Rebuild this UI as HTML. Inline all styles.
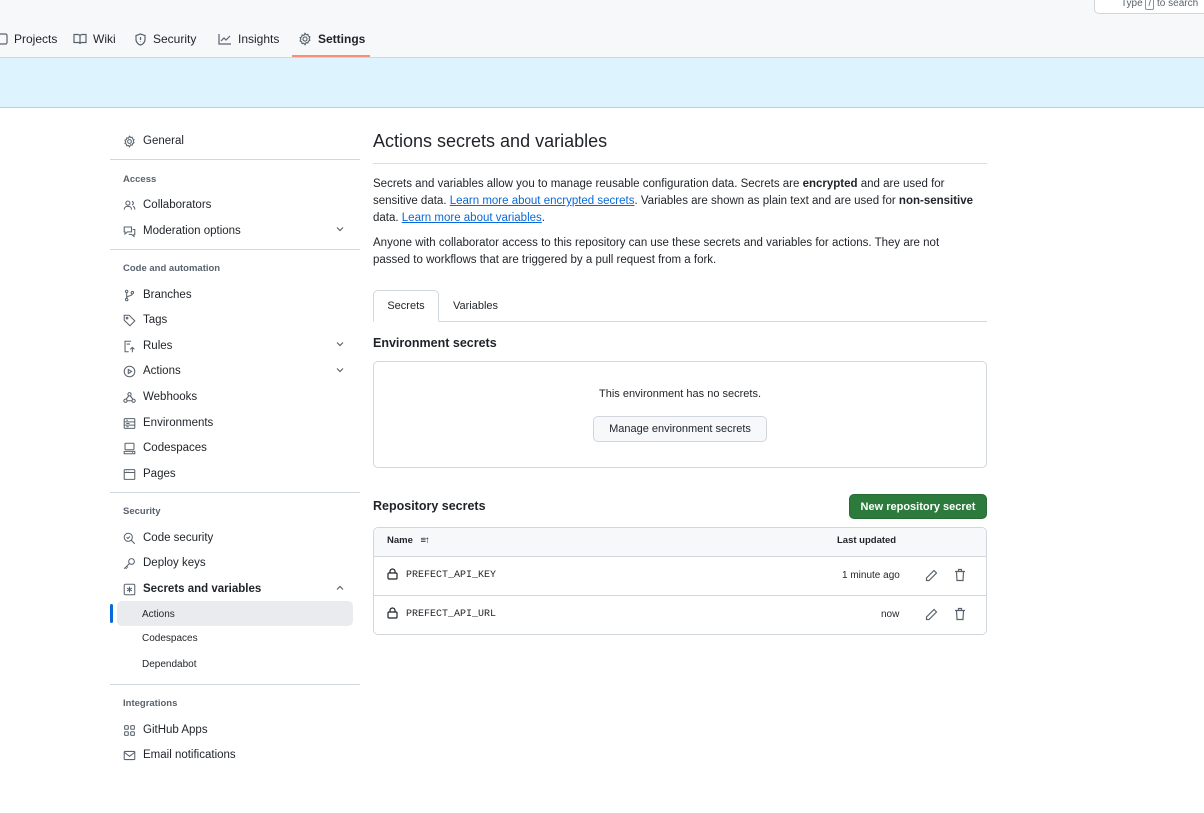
<!DOCTYPE html>
<html><head><meta charset="utf-8"><style>
*{box-sizing:border-box;margin:0;padding:0}
body{width:1204px;height:813px;overflow:hidden;background:#fff;font-family:"Liberation Sans",sans-serif;color:#1f2328;position:relative;font-size:12px}
.a{position:absolute;white-space:nowrap}
.top{position:absolute;left:0;top:0;width:1204px;height:58px;background:#f6f8fa;border-bottom:1px solid #d0d7de}
.ban{position:absolute;left:0;top:58px;width:1204px;height:50px;background:#ddf4ff;border-bottom:1px solid #a8d4f5}
.nav{top:32px;font-size:12px;display:flex;align-items:center;gap:6px}
.si{left:123px;font-size:11.5px;display:flex;align-items:center;gap:7px;line-height:14px;margin-top:1px}
.si svg{width:13px;height:13px;fill:none;stroke:#59636e;stroke-width:1.3}
.hd{left:123px;font-size:9.5px;font-weight:bold;color:#59636e;margin-top:1px}
.dv{position:absolute;left:110px;width:250px;height:1px;background:#d0d7de}
.sub{left:142px;font-size:10px;margin-top:1px}
.chev{position:absolute;left:336px;width:8px;height:8px}
a{color:#0969da;text-decoration:underline}
.p{left:373px;font-size:11.5px;line-height:17px}
.btn{position:absolute;border:1px solid #d0d7de;border-radius:5px;background:#f6f8fa;font-size:11px;display:flex;align-items:center;justify-content:center}
.mono{font-family:"Liberation Mono",monospace;font-size:10px}
</style></head><body>
<div class="top"></div>
<div class="a" style="left:1094px;top:-6px;width:120px;height:20px;border:1px solid #d0d7de;border-radius:5px;background:#fff;font-size:10px;color:#59636e;padding:3px 0 0 26px">Type <span style="border:1px solid #8c959f;border-radius:2px;padding:0 2px">/</span> to search</div>
<div class="a nav" style="left:-4px"><svg width="12" height="12" viewBox="0 0 12 12"><rect x="1" y="1" width="10" height="10" rx="1.5" fill="none" stroke="#59636e" stroke-width="1.2"/></svg>Projects</div>
<div class="a nav" style="left:73px"><svg width="14" height="12" viewBox="0 0 14 12" fill="none" stroke="#59636e" stroke-width="1.2"><path d="M1 1.5h4a2 2 0 0 1 2 2V11a1.5 1.5 0 0 0-1.5-1.5H1zM13 1.5H9a2 2 0 0 0-2 2V11a1.5 1.5 0 0 1 1.5-1.5H13z"/></svg>Wiki</div>
<div class="a nav" style="left:134px"><svg width="13" height="13" viewBox="0 0 13 13" fill="none" stroke="#59636e" stroke-width="1.2"><path d="M6.5 1L2 2.5v4c0 3 2.5 5 4.5 5.5 2-.5 4.5-2.5 4.5-5.5v-4z"/><path d="M6.5 4v3M6.5 8.5v.5"/></svg>Security</div>
<div class="a nav" style="left:218px"><svg width="14" height="12" viewBox="0 0 14 12" fill="none" stroke="#59636e" stroke-width="1.2"><path d="M1 1v10h12M3 8l3-3 2 2 4-4"/></svg>Insights</div>
<div class="a nav" style="left:298px;font-weight:bold"><svg width="14" height="14" viewBox="0 0 16 16" fill="none" stroke="#59636e" stroke-width="1.3"><circle cx="8" cy="8" r="2.3"/><path d="M8 1.5l1.3 1.6 2-.4.5 2 1.8 1-.9 1.9.9 1.9-1.8 1-.5 2-2-.4L8 14.5l-1.3-1.6-2 .4-.5-2-1.8-1 .9-1.9-.9-1.9 1.8-1 .5-2 2 .4z"/></svg>Settings</div>
<div class="a" style="left:292px;top:55px;width:78px;height:2px;background:#fd8c73"></div>
<div class="ban"></div>

<div class="a si" style="top:133px"><svg viewBox="0 0 16 16"><circle cx="8" cy="8" r="2.3"/><path d="M8 1.5l1.3 1.6 2-.4.5 2 1.8 1-.9 1.9.9 1.9-1.8 1-.5 2-2-.4L8 14.5l-1.3-1.6-2 .4-.5-2-1.8-1 .9-1.9-.9-1.9 1.8-1 .5-2 2 .4z"/></svg>General</div>
<div class="dv" style="top:159px"></div>
<div class="a hd" style="top:173px">Access</div>
<div class="a si" style="top:197px"><svg viewBox="0 0 16 16"><circle cx="6" cy="5" r="2.5"/><path d="M1.5 13c0-2.5 2-4 4.5-4s4.5 1.5 4.5 4M11 3a2.2 2.2 0 0 1 0 4.3M12.5 9c1.5.5 2 2 2 4"/></svg>Collaborators</div>
<div class="a si" style="top:223px"><svg viewBox="0 0 16 16"><path d="M1.5 2.5h9v6h-5l-3 2.5v-2.5h-1zM12 5.5h2.5v6h-1V14l-3-2.5H7"/></svg>Moderation options</div>
<svg class="chev" style="top:225px" viewBox="0 0 8 8"><path d="M1 2.5l3 3 3-3" fill="none" stroke="#59636e" stroke-width="1.2"/></svg>
<div class="dv" style="top:249px"></div>
<div class="a hd" style="top:262px">Code and automation</div>
<div class="a si" style="top:287px"><svg viewBox="0 0 16 16"><circle cx="4.5" cy="3" r="1.5"/><circle cx="4.5" cy="13" r="1.5"/><circle cx="11.5" cy="4.5" r="1.5"/><path d="M4.5 4.5v7M11.5 6c0 3-7 2-7 5"/></svg>Branches</div>
<div class="a si" style="top:312px"><svg viewBox="0 0 16 16"><path d="M1.5 1.5h6l7 7-6 6-7-7z"/><circle cx="5" cy="5" r="1"/></svg>Tags</div>
<div class="a si" style="top:338px"><svg viewBox="0 0 16 16"><path d="M10 1.5H2.5v13H7M11.5 15V9M9 11.5l2.5-2.5 2.5 2.5M4.5 5h4"/></svg>Rules</div>
<svg class="chev" style="top:340px" viewBox="0 0 8 8"><path d="M1 2.5l3 3 3-3" fill="none" stroke="#59636e" stroke-width="1.2"/></svg>
<div class="a si" style="top:363px"><svg viewBox="0 0 16 16"><circle cx="8" cy="8" r="6.5"/><path d="M6.5 5.5v5l4-2.5z"/></svg>Actions</div>
<svg class="chev" style="top:366px" viewBox="0 0 8 8"><path d="M1 2.5l3 3 3-3" fill="none" stroke="#59636e" stroke-width="1.2"/></svg>
<div class="a si" style="top:389px"><svg viewBox="0 0 16 16"><circle cx="8" cy="4" r="2"/><circle cx="3" cy="12" r="2"/><circle cx="13" cy="12" r="2"/><path d="M7 6l-3 4M5 12h6M9 6l3 4"/></svg>Webhooks</div>
<div class="a si" style="top:415px"><svg viewBox="0 0 16 16"><rect x="1.5" y="2" width="13" height="12" rx="1"/><path d="M1.5 6h13M1.5 10h13M4 4h2M4 8h4M4 12h3"/></svg>Environments</div>
<div class="a si" style="top:440px"><svg viewBox="0 0 16 16"><rect x="2.5" y="1.5" width="11" height="8" rx="1"/><path d="M1.5 11.5h13v3h-13zM11 13h1"/></svg>Codespaces</div>
<div class="a si" style="top:466px"><svg viewBox="0 0 16 16"><rect x="1.5" y="2" width="13" height="12" rx="1"/><path d="M1.5 5.5h13M4 3.8h.5M6 3.8h.5"/></svg>Pages</div>
<div class="dv" style="top:492px"></div>
<div class="a hd" style="top:505px">Security</div>
<div class="a si" style="top:530px"><svg viewBox="0 0 16 16"><circle cx="6.5" cy="6.5" r="5"/><path d="M10 10l4.5 4.5M4.5 6.5l1.5 1.5 2.5-2.5"/></svg>Code security</div>
<div class="a si" style="top:555px"><svg viewBox="0 0 16 16"><circle cx="10.5" cy="5.5" r="3.5"/><path d="M8 8l-6.5 6.5M3 13l1.5 1.5M4.5 11.5L6 13"/></svg>Deploy keys</div>
<div class="a si" style="top:581px;font-weight:bold"><svg viewBox="0 0 16 16"><rect x="1.5" y="1.5" width="13" height="13" rx="1.5"/><path d="M8 4.5v7M5 6.2l6 3.6M11 6.2l-6 3.6"/></svg>Secrets and variables</div>
<svg class="chev" style="top:584px" viewBox="0 0 8 8"><path d="M1 5.5l3-3 3 3" fill="none" stroke="#59636e" stroke-width="1.2"/></svg>
<div class="a" style="left:117px;top:601px;width:236px;height:25px;background:#e9ebef;border-radius:5px"></div>
<div class="a" style="left:110px;top:604px;width:3px;height:19px;background:#0969da;border-radius:2px"></div>
<div class="a sub" style="top:608px">Actions</div>
<div class="a sub" style="top:632px">Codespaces</div>
<div class="a sub" style="top:658px">Dependabot</div>
<div class="dv" style="top:684px"></div>
<div class="a hd" style="top:697px">Integrations</div>
<div class="a si" style="top:722px"><svg viewBox="0 0 16 16"><rect x="2" y="2" width="4.5" height="4.5" rx="1"/><rect x="9.5" y="2" width="4.5" height="4.5" rx="1"/><rect x="2" y="9.5" width="4.5" height="4.5" rx="1"/><rect x="9.5" y="9.5" width="4.5" height="4.5" rx="1"/></svg>GitHub Apps</div>
<div class="a si" style="top:747px"><svg viewBox="0 0 16 16"><rect x="1.5" y="3" width="13" height="10" rx="1"/><path d="M1.5 4l6.5 5 6.5-5"/></svg>Email notifications</div>

<div class="a" style="left:373px;top:131px;font-size:18px">Actions secrets and variables</div>
<div class="a" style="left:373px;top:163px;width:614px;height:1px;background:#d8dee4"></div>
<div class="a p" style="top:176px">Secrets and variables allow you to manage reusable configuration data. Secrets are <b>encrypted</b> and are used for<br>sensitive data. <a>Learn more about encrypted secrets</a>. Variables are shown as plain text and are used for <b>non-sensitive</b><br>data. <a>Learn more about variables</a>.</div>
<div class="a p" style="top:235px">Anyone with collaborator access to this repository can use these secrets and variables for actions. They are not<br>passed to workflows that are triggered by a pull request from a fork.</div>
<div class="a" style="left:373px;top:321px;width:614px;height:1px;background:#d0d7de"></div>
<div class="a" style="left:373px;top:290px;width:66px;height:32px;border:1px solid #d0d7de;border-bottom-color:#fff;border-radius:5px 5px 0 0;background:#fff;font-size:11px;text-align:center;line-height:31px">Secrets</div>
<div class="a" style="left:453px;top:300px;font-size:11px">Variables</div>
<div class="a" style="left:373px;top:336px;font-size:12.5px;font-weight:bold">Environment secrets</div>
<div class="a" style="left:373px;top:361px;width:614px;height:107px;border:1px solid #d0d7de;border-radius:5px"></div>
<div class="a" style="left:373px;top:388px;width:614px;text-align:center;font-size:11px">This environment has no secrets.</div>
<div class="btn" style="left:593px;top:416px;width:174px;height:26px">Manage environment secrets</div>
<div class="a" style="left:373px;top:499px;font-size:12.5px;font-weight:bold">Repository secrets</div>
<div class="btn" style="left:849px;top:494px;width:138px;height:25px;background:#2c7b3c;border-color:#256b33;color:#fff;font-weight:bold;font-size:11px">New repository secret</div>
<div class="a" style="left:373px;top:527px;width:614px;height:108px;border:1px solid #d0d7de;border-radius:5px;overflow:hidden">
<div style="height:29px;background:#f6f8fa;border-bottom:1px solid #d0d7de"></div>
<div style="height:39px;border-bottom:1px solid #d0d7de"></div>
</div>
<div class="a" style="left:387px;top:535px;font-size:9.5px;font-weight:bold">Name <span style="font-weight:normal;letter-spacing:-1px;margin-left:5px">≡↑</span></div>
<div class="a" style="left:837px;top:535px;font-size:9.5px;font-weight:bold;color:#1f2328">Last updated</div>
<svg class="a" style="left:387px;top:568px" width="11" height="12" viewBox="0 0 11 12" fill="none" stroke="#1f2328" stroke-width="1.2"><rect x="1" y="5" width="9" height="6" rx="1"/><path d="M3 5V3.5a2.5 2.5 0 0 1 5 0V5"/></svg>
<div class="a mono" style="left:406px;top:570px">PREFECT_API_KEY</div>
<div class="a" style="left:842px;top:570px;font-size:10px">1 minute ago</div>
<svg class="a" style="left:387px;top:607px" width="11" height="12" viewBox="0 0 11 12" fill="none" stroke="#1f2328" stroke-width="1.2"><rect x="1" y="5" width="9" height="6" rx="1"/><path d="M3 5V3.5a2.5 2.5 0 0 1 5 0V5"/></svg>
<div class="a mono" style="left:406px;top:609px">PREFECT_API_URL</div>
<div class="a" style="left:881px;top:609px;font-size:10px">now</div>
<svg class="a" style="left:925px;top:569px" width="13" height="13" viewBox="0 0 13 13" fill="none" stroke="#59636e" stroke-width="1.2"><path d="M9 1.5l2.5 2.5L4 11.5H1.5V9z"/></svg>
<svg class="a" style="left:954px;top:568px" width="12" height="14" viewBox="0 0 12 14" fill="none" stroke="#59636e" stroke-width="1.2"><path d="M1 3.5h10M4.5 3.5V1.5h3v2M2.5 3.5l.5 9h6l.5-9"/></svg>
<svg class="a" style="left:925px;top:608px" width="13" height="13" viewBox="0 0 13 13" fill="none" stroke="#59636e" stroke-width="1.2"><path d="M9 1.5l2.5 2.5L4 11.5H1.5V9z"/></svg>
<svg class="a" style="left:954px;top:607px" width="12" height="14" viewBox="0 0 12 14" fill="none" stroke="#59636e" stroke-width="1.2"><path d="M1 3.5h10M4.5 3.5V1.5h3v2M2.5 3.5l.5 9h6l.5-9"/></svg>
</body></html>
